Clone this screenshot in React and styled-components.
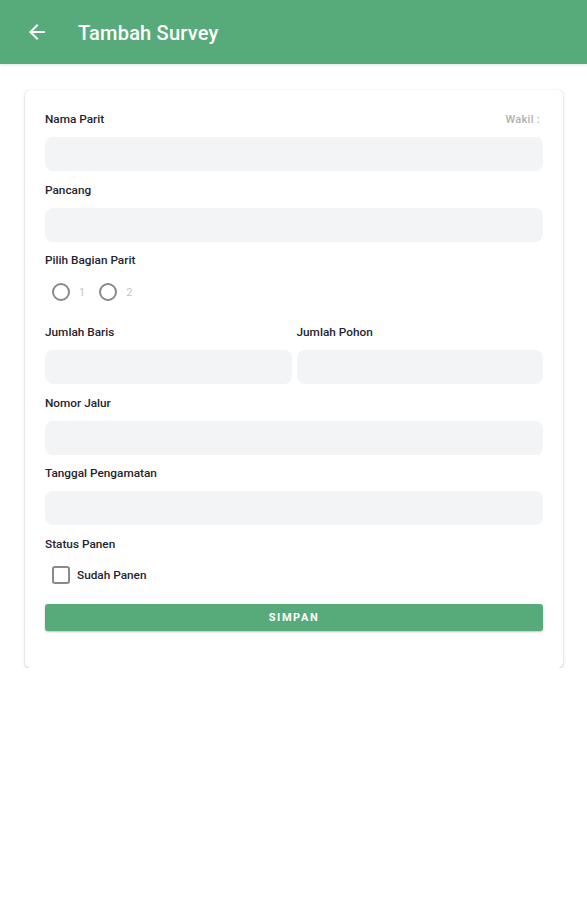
import React, { useState } from "react"
import styled, { createGlobalStyle } from "styled-components"

const GlobalStyle = createGlobalStyle`
  body {
    margin: 0;
    background: #ffffff;
    font-family: Roboto, "Liberation Sans", sans-serif;
  }
`

const Header = styled.header`
  height: 64px;
  background: #57ab7a;
  display: flex;
  align-items: center;
  padding-left: 25px;
  box-shadow: 0 1px 3px rgba(0, 0, 0, 0.12);
`

const BackButton = styled.button`
  border: none;
  background: none;
  padding: 0;
  width: 24px;
  height: 24px;
  display: flex;
  color: #ffffff;
  cursor: pointer;
`

const Title = styled.h1`
  margin: 1px 0 0 29px;
  font-size: 20px;
  font-weight: 500;
  color: #ffffff;
  letter-spacing: 0.2px;
`

const Page = styled.main`
  padding: 26px 24px 0 25px;
`

const Card = styled.form`
  background: #ffffff;
  border-radius: 5px;
  box-shadow: 0 1px 3px rgba(0, 0, 0, 0.22), 0 0 1px rgba(0, 0, 0, 0.14);
  padding: 22px 20px 37px;
  display: flex;
  flex-direction: column;
`

const Field = styled.div`
  display: flex;
  flex-direction: column;
  margin-bottom: 11.5px;
  flex: 1;
`

const LabelRow = styled.div`
  display: flex;
  justify-content: space-between;
  align-items: center;
  height: 14px;
  margin-bottom: 11px;
`

const Label = styled.label`
  font-size: 11.8px;
  font-weight: 500;
  color: #1f2430;
`

const Hint = styled.span`
  font-size: 11px;
  font-weight: 500;
  color: #b0b0b0;
  margin-right: 3px;
  letter-spacing: 0.3px;
`

const Input = styled.input`
  height: 34px;
  border: none;
  border-radius: 8px;
  background: #f3f4f6;
  outline: none;
  padding: 0 12px;
  font-family: inherit;
  font-size: 12px;
`

const Split = styled.div`
  display: flex;
  gap: 5px;
`

const RadioGroup = styled.div`
  display: flex;
  align-items: center;
  height: 26px;
  padding-left: 7px;
  gap: 14px;
  margin-top: 1px;
  margin-bottom: 20px;
`

const RadioOption = styled.label`
  display: flex;
  align-items: center;
  gap: 9px;
  font-size: 11px;
  color: #c6c6c6;
`

const RadioCircle = styled.span`
  width: 14px;
  height: 14px;
  border: 2px solid #8a8a8a;
  border-radius: 50%;
`

const CheckRow = styled.label`
  display: flex;
  align-items: center;
  gap: 7px;
  padding-left: 7px;
  margin-top: 3px;
  margin-bottom: 19px;
  height: 20px;
  font-size: 11.8px;
  font-weight: 500;
  color: #1f2430;
`

const CheckBox = styled.span`
  width: 14px;
  height: 14px;
  border: 2px solid #8a8a8a;
  border-radius: 3px;
`

const SaveButton = styled.button`
  height: 27px;
  border: none;
  border-radius: 3px;
  background: #57ab7a;
  color: #ffffff;
  font-family: inherit;
  font-size: 11px;
  font-weight: 700;
  letter-spacing: 1.6px;
  box-shadow: 0 1px 2px rgba(0, 0, 0, 0.25);
  cursor: pointer;
`

const ArrowLeft = () => (
  <svg width="24" height="24" viewBox="0 0 24 24" fill="currentColor">
    <path d="M20 11H7.83l5.59-5.59L12 4l-8 8 8 8 1.41-1.41L7.83 13H20v-2z" />
  </svg>
)

const App = () => {
  const [bagian, setBagian] = useState(null)
  const [panen, setPanen] = useState(false)

  return (
    <>
      <GlobalStyle />
      <Header>
        <BackButton aria-label="Kembali">
          <ArrowLeft />
        </BackButton>
        <Title>Tambah Survey</Title>
      </Header>
      <Page>
        <Card onSubmit={(e) => e.preventDefault()}>
          <Field>
            <LabelRow>
              <Label>Nama Parit</Label>
              <Hint>Wakil :</Hint>
            </LabelRow>
            <Input />
          </Field>
          <Field>
            <LabelRow>
              <Label>Pancang</Label>
            </LabelRow>
            <Input />
          </Field>
          <LabelRow>
            <Label>Pilih Bagian Parit</Label>
          </LabelRow>
          <RadioGroup>
            {["1", "2"].map((v) => (
              <RadioOption key={v} onClick={() => setBagian(v)}>
                <RadioCircle />
                {v}
              </RadioOption>
            ))}
          </RadioGroup>
          <Split>
            <Field>
              <LabelRow>
                <Label>Jumlah Baris</Label>
              </LabelRow>
              <Input />
            </Field>
            <Field>
              <LabelRow>
                <Label>Jumlah Pohon</Label>
              </LabelRow>
              <Input />
            </Field>
          </Split>
          <Field>
            <LabelRow>
              <Label>Nomor Jalur</Label>
            </LabelRow>
            <Input />
          </Field>
          <Field>
            <LabelRow>
              <Label>Tanggal Pengamatan</Label>
            </LabelRow>
            <Input />
          </Field>
          <LabelRow>
            <Label>Status Panen</Label>
          </LabelRow>
          <CheckRow onClick={() => setPanen(!panen)}>
            <CheckBox />
            Sudah Panen
          </CheckRow>
          <SaveButton type="submit">SIMPAN</SaveButton>
        </Card>
      </Page>
    </>
  )
}

export default App
